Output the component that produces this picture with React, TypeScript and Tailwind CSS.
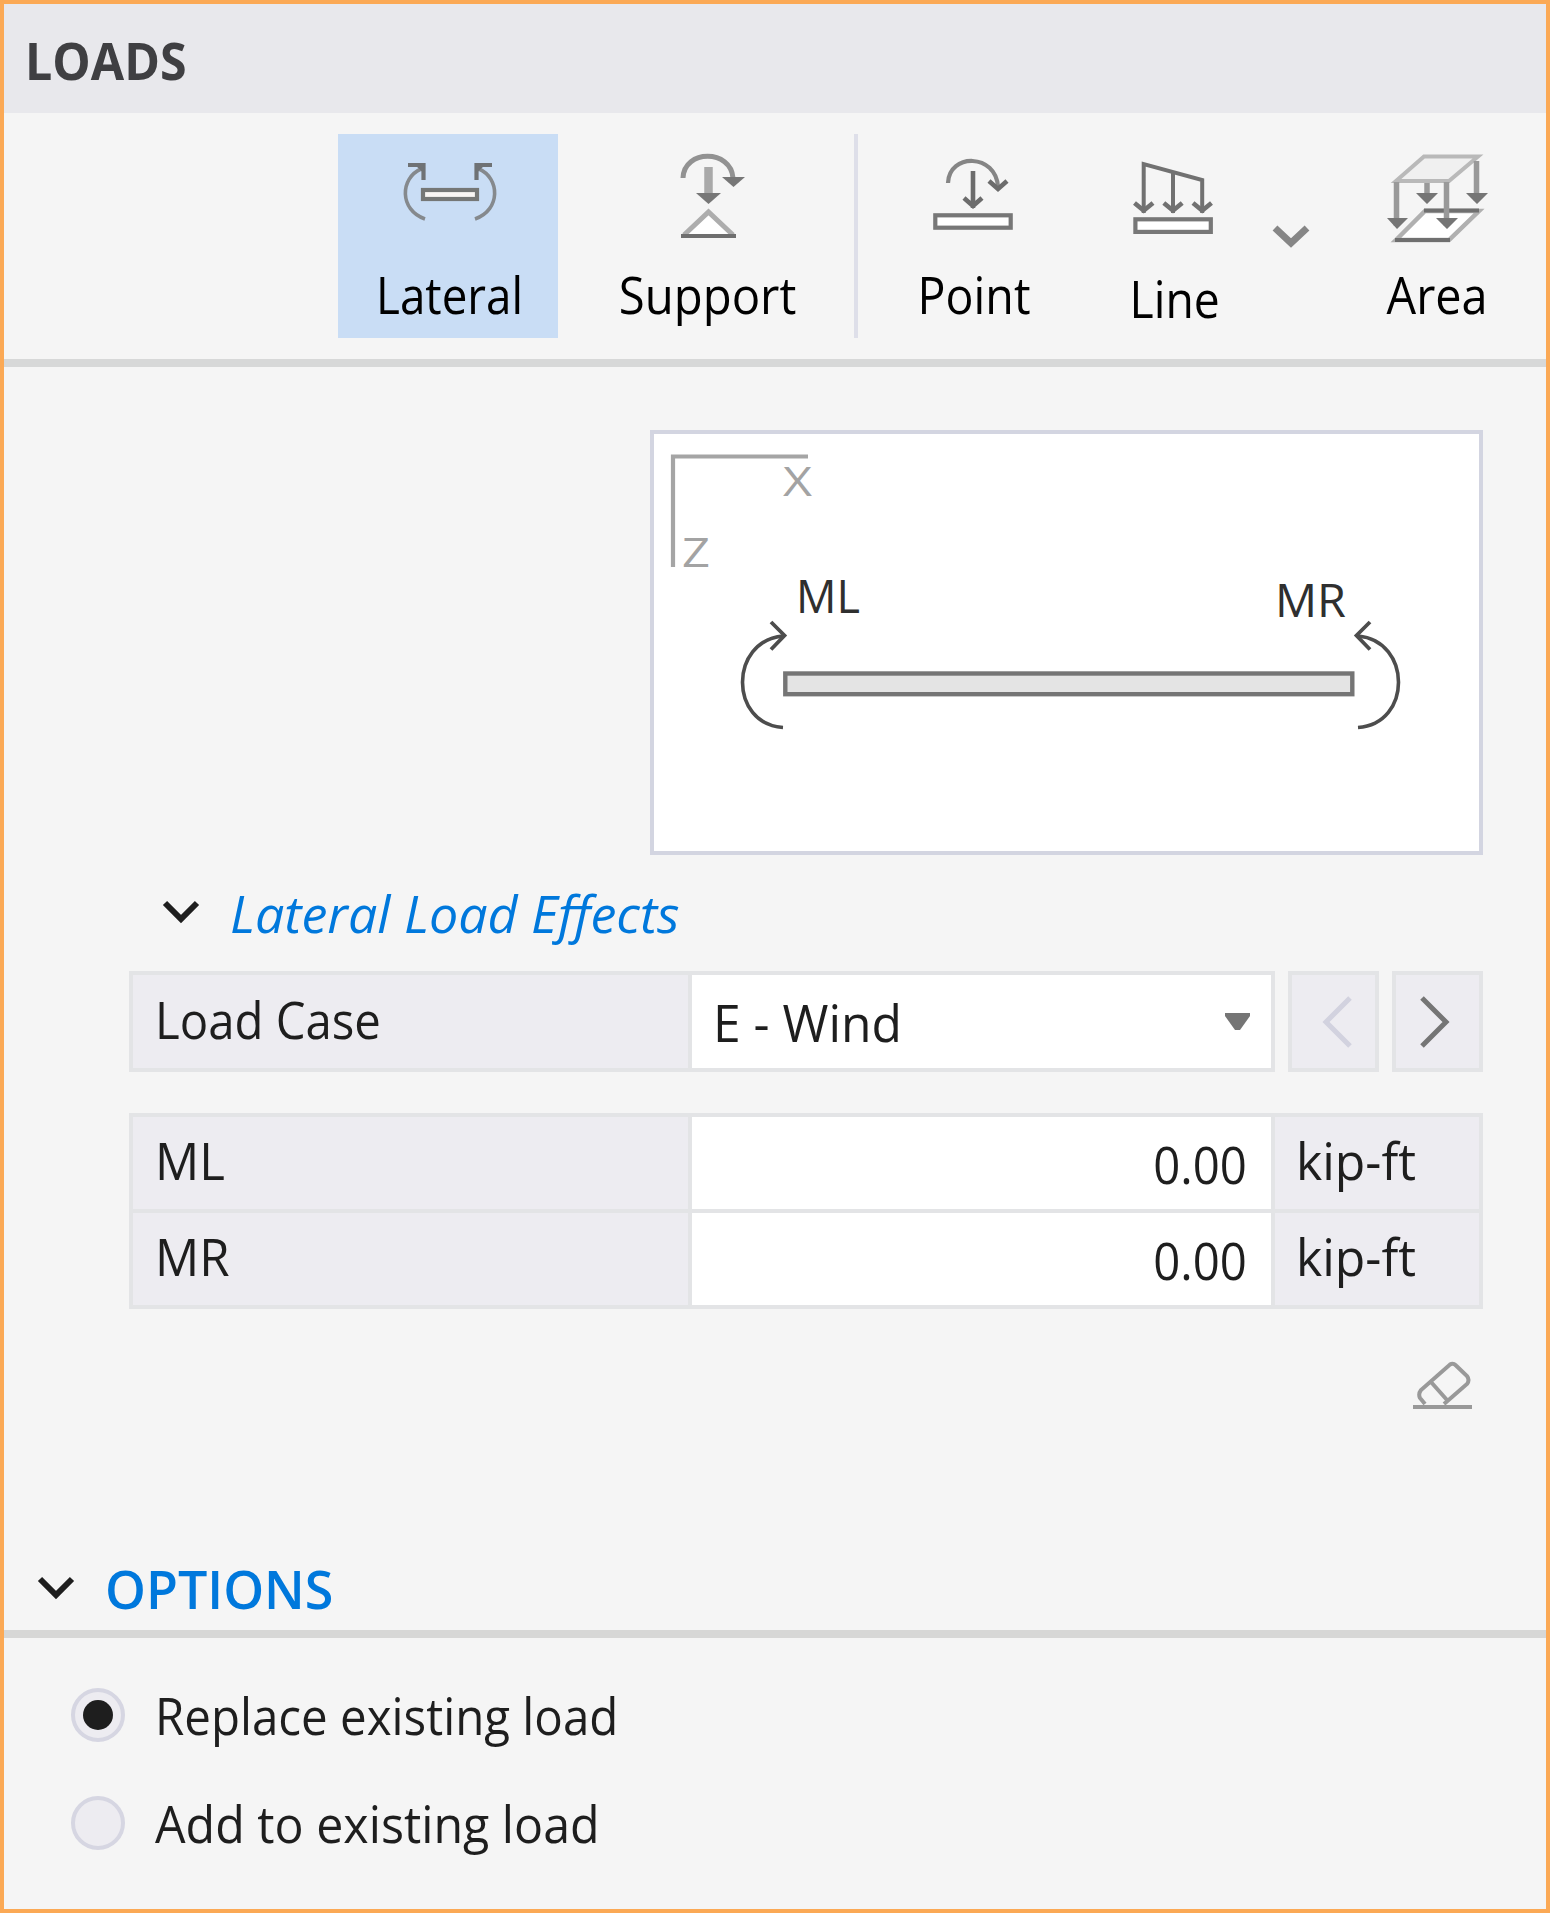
import { useState, type ReactNode } from 'react';
import clsx from 'clsx';

const tools = [
  { id: 'lateral', label: 'Lateral', width: 'w-[220px]', text: 'scale-x-[0.88]', icon: <LateralIcon /> },
  { id: 'support', label: 'Support', width: 'w-[296px]', text: 'scale-x-[0.91]', icon: <SupportIcon /> },
  { id: 'point', label: 'Point', width: 'w-[230px]', text: 'scale-x-[0.895]', icon: <PointIcon /> },
  { id: 'line', label: 'Line', width: 'w-[170px]', text: 'translate-y-1 scale-x-[0.89]', icon: <LineIcon /> },
  { id: 'area', label: 'Area', width: 'w-[223px]', text: 'translate-x-px scale-x-[0.9]', icon: <AreaIcon /> },
];

const moments = [
  { name: 'ML', value: '0.00', unit: 'kip-ft' },
  { name: 'MR', value: '0.00', unit: 'kip-ft' },
];

const loadModes = [
  { label: 'Replace existing load', text: 'scale-x-[0.913]' },
  { label: 'Add to existing load', text: 'scale-x-[0.93]' },
];

function Label({ children, className }: { children: ReactNode; className?: string }) {
  return <span className={clsx('inline-block whitespace-nowrap', className)}>{children}</span>;
}

function LateralIcon() {
  const arrow = (
    <g fill="none" stroke="#6f7275">
      <path d="M421 169C400 178 399 210 425 219" strokeWidth="3.6" stroke="#85898d" />
      <path d="M408 165H423.5V180" strokeWidth="4.2" />
      <path d="M415 165H423.5V173Z" fill="#6f7275" stroke="none" />
    </g>
  );
  return (
    <svg viewBox="338 134 220 120" className="h-[120px] w-[220px] shrink-0">
      {arrow}
      <g transform="translate(900 0) scale(-1 1)">{arrow}</g>
      <rect x="423" y="190" width="54" height="9" fill="#f8f5f3" stroke="#757776" strokeWidth="4.2" />
    </svg>
  );
}

function SupportIcon() {
  return (
    <svg viewBox="558 134 296 120" className="h-[120px] w-[296px] shrink-0" fill="none">
      <path d="M683 178C684 149 731 149 733 178" stroke="#929292" strokeWidth="5" />
      <path d="M722 177H745L733.5 187Z" fill="#777" />
      <path d="M708.5 167V196" stroke="#a9a9a9" strokeWidth="8.5" />
      <path d="M696 193H721L708.5 204Z" fill="#777" />
      <path d="M684 235L708.5 212L733 235" fill="#fff" stroke="#adadad" strokeWidth="5" />
      <path d="M681 236H736" stroke="#6f6f6f" strokeWidth="4.2" />
    </svg>
  );
}

function PointIcon() {
  return (
    <svg viewBox="858 134 230 120" className="h-[120px] w-[230px] shrink-0" fill="none" stroke="#6c6c6c">
      <path d="M948 183C949 153 996 153 998 187" strokeWidth="4.2" stroke="#858585" />
      <path d="M989 181L998 189L1007 181M973 171V208M964 198L973 206L982 198" strokeWidth="4.6" />
      <rect x="935.3" y="215.3" width="75.4" height="12.4" fill="#fff" stroke="#777" strokeWidth="4.2" />
    </svg>
  );
}

function LineIcon() {
  return (
    <svg viewBox="1088 134 170 120" className="h-[120px] w-[170px] shrink-0" fill="none" stroke="#717171">
      <path d="M1143.7 213V164L1202.2 180V213M1173 172V213" strokeWidth="4" />
      <path
        d="M1134.5 203L1143.7 210.5L1153 203M1163.8 203L1173 210.5L1182.2 203M1193 203L1202.2 210.5L1211.5 203"
        strokeWidth="4.6"
      />
      <rect x="1135.4" y="219.3" width="75.4" height="12.6" fill="#fff" stroke="#777" strokeWidth="4.2" />
    </svg>
  );
}

function AreaIcon() {
  return (
    <svg viewBox="1323 134 223 120" className="h-[120px] w-[223px] shrink-0" fill="none">
      <path d="M1396 181L1424 156.5H1478L1449 181Z" fill="#f0f0f0" stroke="#b9b9b9" strokeWidth="4" />
      <path d="M1396 240L1425 211H1479L1449 240Z" fill="#fff" stroke="#b0b0b0" strokeWidth="4.5" />
      <path d="M1424 210.5H1479M1395 240H1450" stroke="#6f6f6f" strokeWidth="4.2" />
      <path d="M1396.5 182V226M1446.5 182V226M1427 183V201M1476.5 161V201" stroke="#999" strokeWidth="5.5" />
      <path
        d="M1387 218H1408L1397 229ZM1436 218H1458L1447 229ZM1416 193H1438L1427 204ZM1466 193H1488L1477 204Z"
        fill="#757575"
      />
    </svg>
  );
}

function CollapseIcon() {
  return (
    <svg viewBox="0 0 38 26" className="h-[26px] w-[38px] shrink-0" fill="none">
      <path d="M3 3L19 19L35 3" stroke="#1e1e1e" strokeWidth="6" />
    </svg>
  );
}

function BeamDiagram() {
  const moment = (
    <g fill="none" stroke="#4d4d4d">
      <path d="M783 727.5C729 724 729 641 783 636" strokeWidth="3.6" />
      <path d="M771 622L784.5 635.5L771 649.5" strokeWidth="3.8" />
    </g>
  );
  return (
    <svg viewBox="654 434 825 417" className="block h-[417px] w-[825px] font-['Open_Sans',sans-serif]">
      <path d="M673 567V456.5H808" fill="none" stroke="#a5a5a5" strokeWidth="4.2" />
      <g fill="#a3a3a3" fontSize="41">
        <text x="783" y="496" textLength="29" lengthAdjust="spacingAndGlyphs">X</text>
        <text x="682" y="567" textLength="28" lengthAdjust="spacingAndGlyphs">Z</text>
      </g>
      <g fill="#2f2f2f" fontSize="46">
        <text x="796" y="613" textLength="64" lengthAdjust="spacingAndGlyphs">ML</text>
        <text x="1275" y="617" textLength="71" lengthAdjust="spacingAndGlyphs">MR</text>
      </g>
      {moment}
      <g transform="translate(2141 0) scale(-1 1)">{moment}</g>
      <rect x="785.3" y="673.5" width="567" height="20.7" fill="#e4e4e4" stroke="#757575" strokeWidth="4.4" />
    </svg>
  );
}

function StepButton({ direction, disabled }: { direction: 'prev' | 'next'; disabled?: boolean }) {
  return (
    <button
      disabled={disabled}
      className={clsx(
        'flex h-[101px] w-[91px] items-center justify-center border-4 border-[#e3e4e6] bg-[#edecf1]',
        direction === 'prev' ? 'pl-2' : 'pr-2'
      )}
    >
      <svg viewBox="0 0 32 54" className="h-[54px] w-8" fill="none">
        <path
          d={direction === 'prev' ? 'M28 3L4 27L28 51' : 'M4 3L28 27L4 51'}
          stroke={disabled ? '#d2d2df' : '#757575'}
          strokeWidth="5"
        />
      </svg>
    </button>
  );
}

export default function App() {
  const [tool, setTool] = useState('lateral');
  const [mode, setMode] = useState(loadModes[0].label);

  return (
    <main className="flex h-[1913px] w-[1550px] flex-col overflow-hidden border-4 border-[#fba955] bg-[#f5f5f5] font-['Open_Sans',sans-serif] text-[52px] text-[#1e1e1e]">
      <header className="h-[109px] shrink-0 bg-[#e8e8ec] pl-[21px] leading-[112px] text-[#3f3f42]">
        <Label className="origin-left scale-x-[0.93] font-bold">LOADS</Label>
      </header>

      <nav className="flex h-[254px] shrink-0 border-b-8 border-[#d7d8d8] pt-[21px] pl-[334px] text-black">
        {tools.map((item) => (
          <div key={item.id} className="flex h-[204px]">
            {item.id === 'area' && (
              <button className="flex w-[65px] justify-center pt-[91px]">
                <svg viewBox="0 0 38 26" className="h-[26px] w-[38px]" fill="none">
                  <path d="M3 3L19 18L35 3" stroke="#868686" strokeWidth="7" />
                </svg>
              </button>
            )}
            <button
              onClick={() => setTool(item.id)}
              className={clsx('flex shrink-0 flex-col items-center', item.width, tool === item.id && 'bg-[#c9ddf5]')}
            >
              {item.icon}
              <Label className={clsx('ml-[3px] origin-center leading-[79px]', item.text)}>{item.label}</Label>
            </button>
            {item.id === 'support' && <div className="w-1 bg-[#dedfe9]" />}
          </div>
        ))}
      </nav>

      <section className="flex flex-col pr-[63px] pl-[125px]">
        <div className="mt-[63px] h-[425px] w-[833px] self-end border-4 border-[#d3d5e1] bg-white">
          <BeamDiagram />
        </div>

        <div className="flex h-[116px] items-center gap-[30px] pl-[33px]">
          <CollapseIcon />
          <Label className="text-[#0078dc] italic">Lateral Load Effects</Label>
        </div>

        <div className="flex justify-between">
          <div className="flex h-[101px] w-[1146px] border-4 border-[#e3e4e6]">
            <div className="w-[559px] border-r-4 border-[#e3e4e6] bg-[#edecf1] pl-[22px] leading-[87px]">
              <Label className="origin-left scale-x-[0.91]">Load Case</Label>
            </div>
            <button className="flex flex-1 items-center justify-between bg-white pr-[21px] pl-[21px] leading-[93px]">
              <Label className="origin-left scale-x-[0.957]">E - Wind</Label>
              <svg viewBox="0 0 25 17" className="h-[17px] w-[25px]">
                <path d="M0 0H25V3L15 17H10L0 3Z" fill="#757575" />
              </svg>
            </button>
          </div>
          <StepButton direction="prev" disabled />
          <StepButton direction="next" />
        </div>

        <div className="mt-[41px] border-4 border-b-0 border-[#e3e4e6]">
          {moments.map((row) => (
            <div key={row.name} className="flex h-24 border-b-4 border-[#e3e4e6]">
              <div className="w-[559px] border-r-4 border-[#e3e4e6] bg-[#edecf1] pl-[22px] leading-[86px]">
                <Label className="origin-left scale-x-[0.945]">{row.name}</Label>
              </div>
              <div className="flex-1 bg-white pr-[24px] text-right leading-[94px]">
                <Label className="origin-right scale-x-[0.91]">{row.value}</Label>
              </div>
              <div className="w-[208px] border-l-4 border-[#e3e4e6] bg-[#edecf1] pl-[21px] leading-[86px]">
                <Label className="origin-left scale-x-[0.96]">{row.unit}</Label>
              </div>
            </div>
          ))}
        </div>

        <button className="mt-[51px] mr-[10px] self-end">
          <svg viewBox="1410 1360 62 50" className="h-[50px] w-[62px]" fill="none" stroke="#999" strokeWidth="4">
            <path d="M1424 1404L1419 1398Q1417 1394 1420 1390L1449 1364.5Q1452 1362.5 1455 1365.5L1466 1376Q1469 1380 1466 1384L1443 1404M1430 1382L1446 1400" />
            <path d="M1412 1407H1471" />
          </svg>
        </button>
      </section>

      <section className="mt-auto h-[361px] shrink-0">
        <div className="flex h-[90px] items-center gap-[30px] border-b-8 border-[#d7d7d6] pl-[33px]">
          <CollapseIcon />
          <Label className="font-semibold text-[#0078dc]">OPTIONS</Label>
        </div>
        <div className="pt-[23px] pl-[67px]">
          {loadModes.map((item) => (
            <label key={item.label} className="flex h-[108px] items-center gap-[30px]">
              <input
                type="radio"
                name="load-mode"
                className="sr-only"
                checked={mode === item.label}
                onChange={() => setMode(item.label)}
              />
              <span className="flex size-[54px] shrink-0 items-center justify-center rounded-full border-4 border-[#d6d6e2] bg-[#edecf1]">
                {mode === item.label && <span className="size-[30px] rounded-full bg-[#1e1e1e]" />}
              </span>
              <Label className={clsx('origin-left', item.text)}>{item.label}</Label>
            </label>
          ))}
        </div>
      </section>
    </main>
  );
}
